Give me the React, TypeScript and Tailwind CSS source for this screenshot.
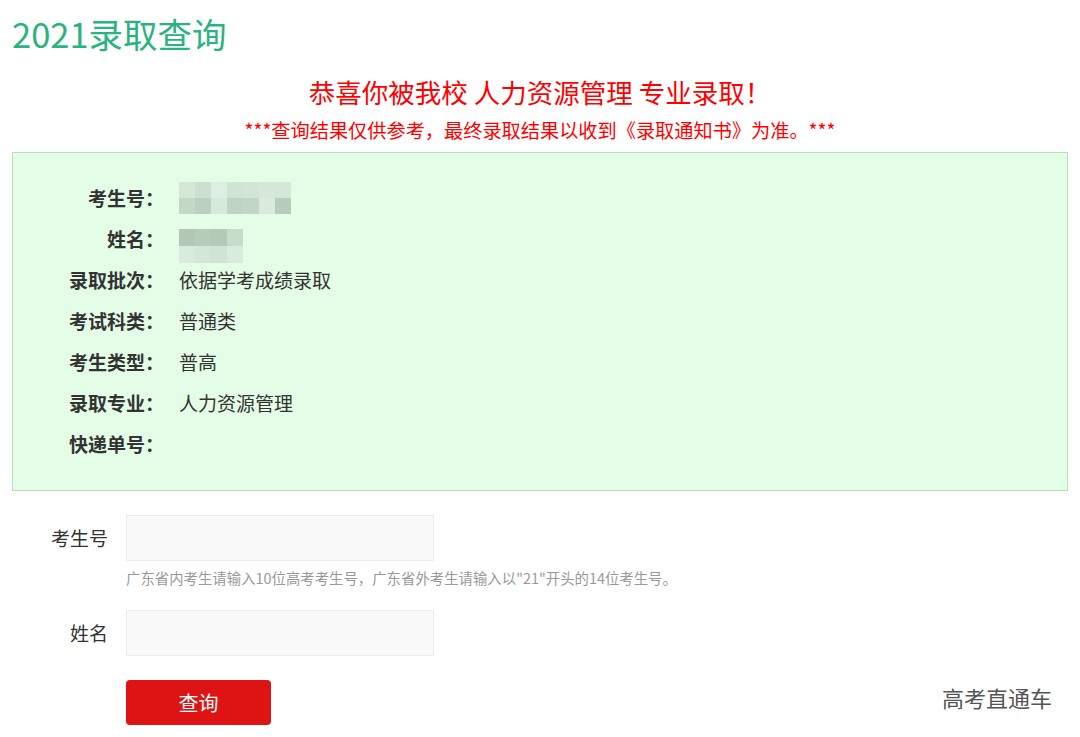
import React from "react";

const font = { fontFamily: '"Noto Sans CJK SC", "Noto Sans", sans-serif' };

const idBlocks: string[][] = [
  ["#d5e8d8", "#cde0d0", "#dcefe0", "#d0e4d3", "#d3e6d6", "#d6e9d9", "#d5e8d8"],
  ["#c4d8c8", "#bcd0c0", "#d6eada", "#bfd3c3", "#c2d6c6", "#d8ebdc", "#b8ccbc"],
];
const nameBlocks: string[][] = [
  ["#b3c7b7", "#b8ccbc", "#b5c9b9", "#c8dccc"],
  ["#d8ebdc", "#d3e6d7", "#d0e3d4", "#d8ebdc"],
];

function Blur({ blocks, h }: { blocks: string[][]; h: number }) {
  return (
    <div className="flex flex-col">
      {blocks.map((row, i) => (
        <div key={i} className="flex">
          {row.map((c, j) => (
            <div key={j} className="w-4" style={{ background: c, height: h }} />
          ))}
        </div>
      ))}
    </div>
  );
}

function Row({ label, children }: { label: string; children?: React.ReactNode }) {
  return (
    <div className="flex h-[41px] items-center">
      <div className="w-[151px] text-right text-[19px] font-bold text-[#333]">{label}</div>
      <div className="ml-[15px] flex items-center text-[19px] text-[#333]">{children}</div>
    </div>
  );
}

export default function App() {
  return (
    <div className="min-h-[737px] w-[1080px] bg-white px-3" style={font}>
      <div className="pt-[12px] text-[34.5px] leading-[42px] text-[#29b47e]">2021录取查询</div>
      <div className="mt-[22px] text-center text-[26.5px] leading-[32px] text-[#ff0000]">
        恭喜你被我校 人力资源管理 专业录取！
      </div>
      <div className="mt-[10px] text-center text-[19.2px] leading-[24px] text-[#ff0000]">
        ***查询结果仅供参考，最终录取结果以收到《录取通知书》为准。***
      </div>
      <div className="mt-[10px] h-[339px] border border-[#b9dfbd] bg-[#e3fde6] pt-[25px]">
        <Row label="考生号：">
          <div className="-mt-[2px]">
            <Blur blocks={idBlocks} h={16} />
          </div>
        </Row>
        <Row label="姓名：">
          <div className="mt-[12px]">
            <Blur blocks={nameBlocks} h={17} />
          </div>
        </Row>
        <Row label="录取批次：">依据学考成绩录取</Row>
        <Row label="考试科类：">普通类</Row>
        <Row label="考生类型：">普高</Row>
        <Row label="录取专业：">人力资源管理</Row>
        <Row label="快递单号：" />
      </div>

      <div className="mt-[24px] flex items-center">
        <div className="w-[96px] text-right text-[19px] text-[#333]">考生号</div>
        <input className="ml-[18px] h-[46px] w-[308px] border border-[#ececec] bg-[#f9f9f9] outline-none" />
      </div>
      <div className="ml-[114px] mt-[7px] text-[14.4px] leading-[20px] text-[#999]">
        广东省内考生请输入10位高考考生号，广东省外考生请输入以"21"开头的14位考生号。
      </div>

      <div className="mt-[22px] flex items-center">
        <div className="w-[96px] text-right text-[19px] text-[#333]">姓名</div>
        <input className="ml-[18px] h-[46px] w-[308px] border border-[#ececec] bg-[#f9f9f9] outline-none" />
      </div>

      <div className="mt-[24px] flex items-start">
        <button className="ml-[114px] h-[45px] w-[145px] rounded-[4px] bg-[#de1414] text-[20px] text-white">
          查询
        </button>
        <div className="ml-auto mr-[16px] mt-[1px] text-[22px] leading-[32px] text-[#555]">高考直通车</div>
      </div>
    </div>
  );
}
